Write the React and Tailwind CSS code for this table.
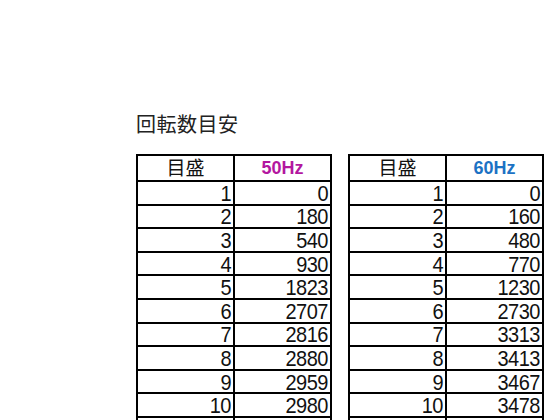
const rows50 = [0, 180, 540, 930, 1823, 2707, 2816, 2880, 2959, 2980];
const rows60 = [0, 160, 480, 770, 1230, 2730, 3313, 3413, 3467, 3478];

const font = { fontFamily: '"Liberation Sans", "Noto Sans CJK JP", sans-serif' };

const Num = ({ children }) => (
  <span className="inline-block scale-y-110 tracking-[-0.5px]">{children}</span>
);

const SpeedTable = ({ label, labelClass, values }) => {
  return (
    <table className="border-collapse border-2 border-black text-[20px] leading-none text-[#111]">
      <thead>
        <tr className="h-[26px]">
          <th className="w-[97px] border-2 border-black font-normal text-center text-[19px]">目盛</th>
          <th className={"w-[97px] border-2 border-black text-center text-[18px] font-bold " + labelClass}>
            {label}
          </th>
        </tr>
      </thead>
      <tbody>
        {values.map((v, i) => (
          <tr key={i} className="h-[23.6px]">
            <td className="border-2 border-black text-right pr-[2px]">
              <Num>{i + 1}</Num>
            </td>
            <td className="border-2 border-black text-right pr-[2px]">
              <Num>{v}</Num>
            </td>
          </tr>
        ))}
        <tr className="h-[23.6px]">
          <td className="border-2 border-black"></td>
          <td className="border-2 border-black"></td>
        </tr>
      </tbody>
    </table>
  );
};

export default function App() {
  return (
    <div className="w-[560px] h-[420px] overflow-hidden bg-white" style={font}>
      <div className="pl-[136px] pt-[112px]">
        <h1 className="text-[20px] leading-[26px] font-normal text-[#222] tracking-[0.5px]">回転数目安</h1>
        <div className="flex gap-[16px] mt-[16px]">
          <SpeedTable label="50Hz" labelClass="text-[#b3179f]" values={rows50} />
          <SpeedTable label="60Hz" labelClass="text-[#1c72c4]" values={rows60} />
        </div>
      </div>
    </div>
  );
}
